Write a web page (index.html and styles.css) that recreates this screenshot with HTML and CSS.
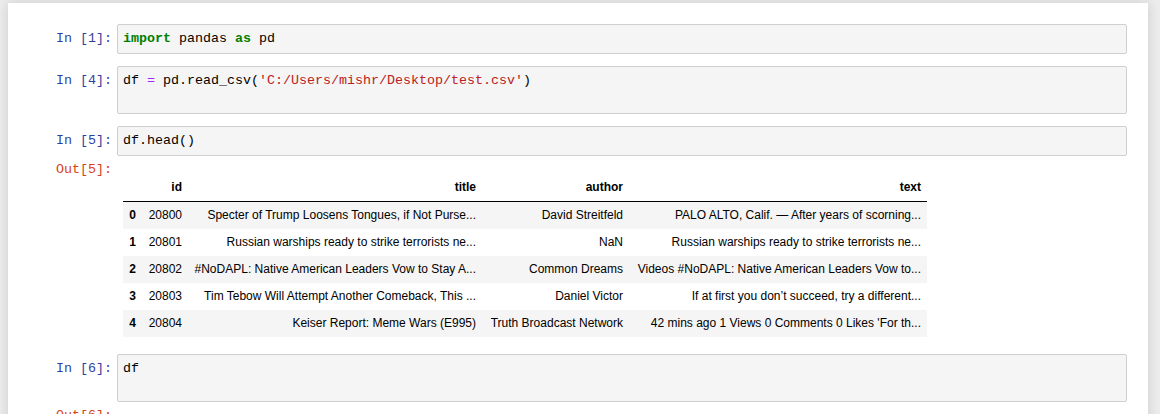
FILE: index.html
```html
<!DOCTYPE html>
<html>
<head>
<meta charset="utf-8">
<link rel="stylesheet" href="styles.css">
</head>
<body>
<div class="notebook">
  <div class="cell">
    <div class="prompt in">In&nbsp;[1]:</div>
    <div class="input"><pre><span class="kw">import</span> pandas <span class="kw">as</span> pd</pre></div>
  </div>
  <div class="cell">
    <div class="prompt in">In&nbsp;[4]:</div>
    <div class="input two-lines"><pre>df <span class="op">=</span> pd.read_csv(<span class="str">'C:/Users/mishr/Desktop/test.csv'</span>)</pre></div>
  </div>
  <div class="cell">
    <div class="prompt in">In&nbsp;[5]:</div>
    <div class="input"><pre>df.head()</pre></div>
  </div>
  <div class="output">
    <div class="prompt out">Out[5]:</div>
    <div class="output-body">
      <table class="df">
        <colgroup>
          <col class="c-index"><col class="c-id"><col class="c-title"><col class="c-author"><col class="c-text">
        </colgroup>
        <thead>
          <tr><th></th><th>id</th><th>title</th><th>author</th><th>text</th></tr>
        </thead>
        <tbody>
          <tr><th>0</th><td>20800</td><td>Specter of Trump Loosens Tongues, if Not Purse...</td><td>David Streitfeld</td><td>PALO ALTO, Calif. — After years of scorning...</td></tr>
          <tr><th>1</th><td>20801</td><td>Russian warships ready to strike terrorists ne...</td><td>NaN</td><td>Russian warships ready to strike terrorists ne...</td></tr>
          <tr><th>2</th><td>20802</td><td>#NoDAPL: Native American Leaders Vow to Stay A...</td><td>Common Dreams</td><td>Videos #NoDAPL: Native American Leaders Vow to...</td></tr>
          <tr><th>3</th><td>20803</td><td>Tim Tebow Will Attempt Another Comeback, This ...</td><td>Daniel Victor</td><td>If at first you don’t succeed, try a different...</td></tr>
          <tr><th>4</th><td>20804</td><td>Keiser Report: Meme Wars (E995)</td><td>Truth Broadcast Network</td><td>42 mins ago 1 Views 0 Comments 0 Likes 'For th...</td></tr>
        </tbody>
      </table>
    </div>
  </div>
  <div class="cell">
    <div class="prompt in">In&nbsp;[6]:</div>
    <div class="input two-lines"><pre>df</pre></div>
  </div>
  <div class="output">
    <div class="prompt out">Out[6]:</div>
    <div class="output-body"></div>
  </div>
</div>
</body>
</html>
```
FILE: styles.css
```css
html, body {
  margin: 0;
  padding: 0;
  background: #eeeeee;
  overflow: hidden;
}
.notebook {
  margin: 3px 0 0 8px;
  width: 1119px;
  padding: 21px 21px 40px 0;
  background: #ffffff;
  box-shadow: 0 0 12px 1px rgba(87, 87, 87, 0.2);
  min-height: 420px;
}
.cell {
  display: flex;
  margin-bottom: 12px;
}
.prompt {
  width: 104px;
  flex: none;
  margin-right: 5px;
  text-align: right;
  font-family: "Liberation Mono", monospace;
  font-size: 13.33px;
  line-height: 17px;
  white-space: nowrap;
}
.cell .prompt {
  padding-top: 6px;
}
.in { color: #303f9f; }
.out { color: #d84315; }
.input {
  flex: 1;
  border: 1px solid #cfcfcf;
  border-radius: 2px;
  background: #f5f5f5;
  padding: 5px 5px 6px;
}
.input pre {
  margin: 0;
  font-family: "Liberation Mono", monospace;
  font-size: 13.33px;
  line-height: 17px;
  color: #000;
}
.input.two-lines pre {
  min-height: 35px;
}
.kw { color: #008000; font-weight: bold; }
.op { color: #aa22ff; }
.str { color: #ba2121; }
.output {
  display: flex;
  margin-top: -8px;
  margin-bottom: 17px;
}
.output .prompt {
  padding-top: 1px;
}
.output-body {
  flex: 1;
  padding: 14px 6px 0;
}
table.df {
  border-collapse: collapse;
  border: none;
  font-family: "Liberation Sans", Arial, sans-serif;
  font-size: 12px;
  color: #000;
}
table.df col.c-index { width: 19px; }
table.df col.c-id { width: 46px; }
table.df col.c-title { width: 294px; }
table.df col.c-author { width: 147px; }
table.df col.c-text { width: 298px; }
table.df th,
table.df td {
  padding: 6px;
  line-height: 15px;
  text-align: right;
  vertical-align: middle;
  white-space: nowrap;
}
table.df th { font-weight: bold; }
table.df thead tr {
  border-bottom: 1px solid #000;
}
table.df tbody tr:nth-child(odd) {
  background: #f5f5f5;
}
```
